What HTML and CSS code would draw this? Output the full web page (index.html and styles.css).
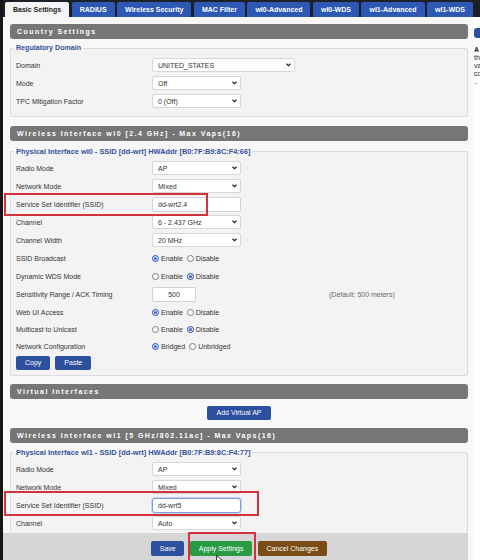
FILE: index.html
```html
<!DOCTYPE html>
<html>
<head>
<meta charset="utf-8">
<link rel="stylesheet" href="styles.css">
</head>
<body>
<div class="app">
  <div class="main">
    <nav class="tabs">
      <span class="tab active">Basic Settings</span>
      <span class="tab">RADIUS</span>
      <span class="tab">Wireless Security</span>
      <span class="tab">MAC Filter</span>
      <span class="tab">wl0-Advanced</span>
      <span class="tab">wl0-WDS</span>
      <span class="tab">wl1-Advanced</span>
      <span class="tab">wl1-WDS</span>
    </nav>
    <div class="content">
      <div class="bar b1">Country Settings</div>
      <fieldset class="fs f1">
        <legend>Regulatory Domain</legend>
        <div class="row"><span class="lbl">Domain</span><div class="sel wide"><span>UNITED_STATES</span><svg class="chev" width="5" height="4" viewBox="0 0 10 7"><path d="M1 1l4 4 4-4" stroke="#222" stroke-width="2.4" fill="none"/></svg></div></div>
        <div class="row"><span class="lbl">Mode</span><div class="sel"><span>Off</span><svg class="chev" width="5" height="4" viewBox="0 0 10 7"><path d="M1 1l4 4 4-4" stroke="#222" stroke-width="2.4" fill="none"/></svg></div></div>
        <div class="row"><span class="lbl">TPC Mitigation Factor</span><div class="sel"><span>0 (Off)</span><svg class="chev" width="5" height="4" viewBox="0 0 10 7"><path d="M1 1l4 4 4-4" stroke="#222" stroke-width="2.4" fill="none"/></svg></div></div>
      </fieldset>

      <div class="bar b2">Wireless Interface wl0 [2.4 GHz] - Max Vaps(16)</div>
      <fieldset class="fs f2">
        <legend>Physical Interface wl0 - SSID [dd-wrt] HWAddr [B0:7F:B9:8C:F4:66]</legend>
        <div class="row"><span class="lbl">Radio Mode</span><div class="sel"><span>AP</span><svg class="chev" width="5" height="4" viewBox="0 0 10 7"><path d="M1 1l4 4 4-4" stroke="#222" stroke-width="2.4" fill="none"/></svg></div></div>
        <div class="row"><span class="lbl">Network Mode</span><div class="sel"><span>Mixed</span><svg class="chev" width="5" height="4" viewBox="0 0 10 7"><path d="M1 1l4 4 4-4" stroke="#222" stroke-width="2.4" fill="none"/></svg></div></div>
        <div class="row mark"><span class="lbl">Service Set Identifier (SSID)</span><div class="inp">dd-wrt2.4</div><span class="hl hl1"></span></div>
        <div class="row"><span class="lbl">Channel</span><div class="sel"><span>6 - 2.437 GHz</span><svg class="chev" width="5" height="4" viewBox="0 0 10 7"><path d="M1 1l4 4 4-4" stroke="#222" stroke-width="2.4" fill="none"/></svg></div></div>
        <div class="row"><span class="lbl">Channel Width</span><div class="sel"><span>20 MHz</span><svg class="chev" width="5" height="4" viewBox="0 0 10 7"><path d="M1 1l4 4 4-4" stroke="#222" stroke-width="2.4" fill="none"/></svg></div></div>
        <div class="row"><span class="lbl">SSID Broadcast</span><span class="rd on"></span><span class="rl">Enable</span><span class="rd"></span><span class="rl">Disable</span></div>
        <div class="row"><span class="lbl">Dynamic WDS Mode</span><span class="rd"></span><span class="rl">Enable</span><span class="rd on"></span><span class="rl">Disable</span></div>
        <div class="row"><span class="lbl">Sensitivity Range / ACK Timing</span><div class="inp num">500</div><span class="note">(Default: 500 meters)</span></div>
        <div class="row"><span class="lbl">Web UI Access</span><span class="rd on"></span><span class="rl">Enable</span><span class="rd"></span><span class="rl">Disable</span></div>
        <div class="row s"><span class="lbl">Multicast to Unicast</span><span class="rd"></span><span class="rl">Enable</span><span class="rd on"></span><span class="rl">Disable</span></div>
        <div class="row s"><span class="lbl">Network Configuration</span><span class="rd on"></span><span class="rl">Bridged</span><span class="rd"></span><span class="rl">Unbridged</span></div>
        <div class="btnrow"><span class="btn">Copy</span><span class="btn">Paste</span></div>
      </fieldset>

      <div class="bar b3">Virtual Interfaces</div>
      <div class="center"><span class="btn">Add Virtual AP</span></div>

      <div class="bar b4">Wireless Interface wl1 [5 GHz/802.11ac] - Max Vaps(16)</div>
      <fieldset class="fs f3">
        <legend>Physical Interface wl1 - SSID [dd-wrt] HWAddr [B0:7F:B9:8C:F4:77]</legend>
        <div class="row"><span class="lbl">Radio Mode</span><div class="sel"><span>AP</span><svg class="chev" width="5" height="4" viewBox="0 0 10 7"><path d="M1 1l4 4 4-4" stroke="#222" stroke-width="2.4" fill="none"/></svg></div></div>
        <div class="row"><span class="lbl">Network Mode</span><div class="sel"><span>Mixed</span><svg class="chev" width="5" height="4" viewBox="0 0 10 7"><path d="M1 1l4 4 4-4" stroke="#222" stroke-width="2.4" fill="none"/></svg></div></div>
        <div class="row mark"><span class="lbl">Service Set Identifier (SSID)</span><div class="inp focus">dd-wrt5</div><span class="hl hl2"></span></div>
        <div class="row"><span class="lbl">Channel</span><div class="sel"><span>Auto</span><svg class="chev" width="5" height="4" viewBox="0 0 10 7"><path d="M1 1l4 4 4-4" stroke="#222" stroke-width="2.4" fill="none"/></svg></div></div>
      </fieldset>
    </div>
    <div class="footer">
      <span class="btn">Save</span>
      <span class="apply"><span class="btn green">Apply Settings</span><span class="hl hl3"></span><svg class="cursor" width="7" height="9" viewBox="0 0 7 9"><path d="M0.5 0.5v7l2-1.6 1.3 2.6 1.3-0.6-1.3-2.5h2.6z" fill="#fff" stroke="#111" stroke-width="0.8"/></svg></span>
      <span class="btn brown">Cancel Changes</span>
    </div>
  </div>
  <aside class="side">
    <div class="side-top"></div>
    <div class="side-head"></div>
    <div class="side-text"><b>A</b><br>th<br>va<br>co<br>..</div>
  </aside>
</div>
</body>
</html>
```

FILE: styles.css
```css
* { box-sizing: border-box; }
html, body { margin: 0; padding: 0; width: 480px; height: 560px; overflow: hidden; }
body {
  font-family: "Liberation Sans", Arial, sans-serif;
  font-size: 7px;
  color: #333;
  background: #fff;
}
.app { display: flex; width: 480px; height: 560px; }
.main {
  width: 473px;
  flex: none;
  display: flex;
  flex-direction: column;
  border-left: 3px solid #151515;
  background: #f8f8f8;
}
.tabs {
  height: 17px;
  flex: none;
  display: flex;
  gap: 2.5px;
  padding: 2px 0 0 2px;
  background: #1c2029;
  white-space: nowrap;
}
.tab {
  height: 15px;
  line-height: 15px;
  padding: 0 8px;
  background: #2d58b4;
  color: #fff;
  font-weight: bold;
  border-radius: 2px 2px 0 0;
  flex: none;
}
.tab.active { background: #f4f4f4; color: #222; }

.content { flex: 1; overflow: hidden; padding: 0 5px 0 7px; }

.bar {
  height: 15px;
  line-height: 15px;
  background: #767676;
  color: #fff;
  font-weight: bold;
  letter-spacing: 1.45px;
  padding-left: 7px;
  border-radius: 3px;
  white-space: nowrap;
}
.b1 { margin-top: 7px; }
.b2 { margin-top: 9px; }
.b3 { margin-top: 8px; }
.b4 { margin-top: 8px; }

.fs {
  margin: 5px 0 0;
  padding: 3px 5px 6px;
  border: 1px solid #dcdcdc;
  border-radius: 2px;
  background: #f3f3f3;
  min-width: 0;
}
.f2 { margin-top: 6px; padding-bottom: 5px; }
.f3 { margin-top: 5px; }
.fs legend {
  padding: 0 2px;
  margin-left: -2px;
  font-weight: bold;
  font-size: 7.4px;
  color: #34519c;
  line-height: 9px;
  white-space: nowrap;
}
.f1 legend { font-size: 7.1px; }

.row { display: flex; align-items: center; height: 18px; }
.row.s { height: 17px; }
.row.mark { position: relative; }
.lbl { width: 136px; flex: none; white-space: nowrap; }

.sel {
  width: 89px;
  height: 14px;
  background: #fff;
  border: 1px solid #d6d6d6;
  border-radius: 2px;
  display: flex;
  align-items: center;
  justify-content: space-between;
  padding: 0 3px 0 5px;
  color: #333;
}
.sel.wide { width: 143px; }
.chev { display: block; }

.inp {
  width: 89px;
  height: 15px;
  line-height: 13px;
  background: #fff;
  border: 1px solid #d2d2d2;
  border-radius: 2px;
  padding-left: 5px;
}
.inp.num { width: 44px; padding: 0; text-align: center; }
.inp.focus { border-color: #7f9ee0; box-shadow: 0 0 0 1px #c5d2f0; border-radius: 3px; }
.note { margin-left: 133px; color: #6a6a6a; }

.rd {
  width: 7px;
  height: 7px;
  border-radius: 50%;
  border: 1px solid #7a7a7a;
  background: #fff;
  margin-right: 2px;
  flex: none;
}
.rd.on { border-color: #3a61c4; background: #3a61c4; box-shadow: inset 0 0 0 1px #fff; }
.rl { margin-right: 4px; }

.btn {
  display: inline-block;
  height: 14px;
  line-height: 14px;
  padding: 0 9px;
  background: #2c4f9e;
  color: #fff;
  border-radius: 2px;
  white-space: nowrap;
}
.btnrow { display: flex; gap: 5px; margin-top: 1px; }
.center { display: flex; justify-content: center; margin-top: 7px; }

.hl { position: absolute; border: 2px solid #d3323a; pointer-events: none; }
.hl1 { left: -12px; top: -2px; width: 204px; height: 23px; }
.hl2 { left: -12px; top: -5px; width: 255px; height: 25px; }

.footer {
  height: 27px;
  flex: none;
  margin-right: 5px;
  background: #d6d6d6;
  display: flex;
  justify-content: center;
  align-items: flex-start;
  gap: 6px;
  padding: 8px 0 0 7px;
}
.footer .btn { height: 15px; line-height: 15px; padding: 0 8.5px; }
.footer .btn.green { background: #2a9b45; }
.footer .btn.brown { background: #7a4c16; }
.apply { position: relative; display: inline-block; }
.hl3 { left: -2px; top: -9px; width: 68px; height: 32px; }
.cursor { position: absolute; left: 26px; top: 14px; }

.side { flex: 1; background: #fff; display: flex; flex-direction: column; overflow: hidden; }
.side-top { height: 17px; background: #1c2029; flex: none; }
.side-head { margin: 11px 0 0 1px; height: 10px; background: #2c4f9e; border-radius: 3px 0 0 3px; flex: none; }
.side-text { margin-top: 8px; padding-left: 1px; line-height: 8px; white-space: nowrap; color: #222; }
```
